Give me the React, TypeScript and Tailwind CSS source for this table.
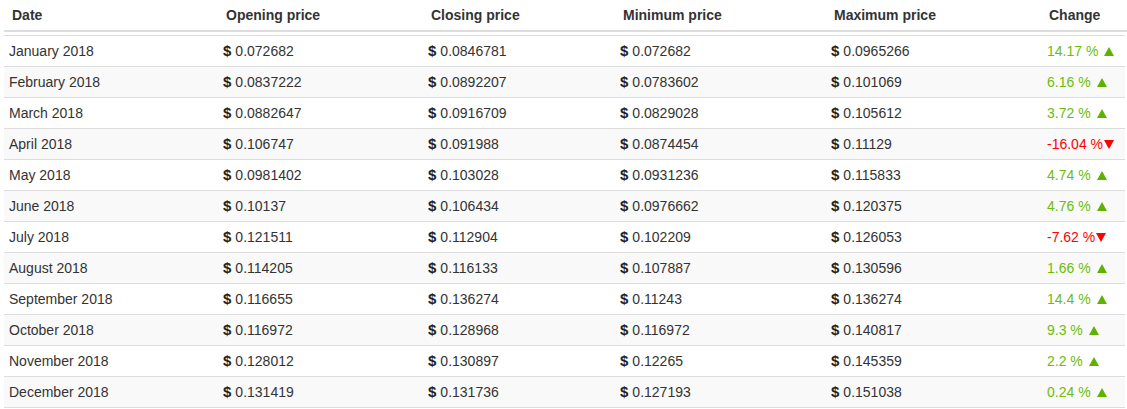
import React from "react";

type Row = { d: string; o: string; c: string; mi: string; ma: string; ch: string; up: boolean };

const rows: Row[] = [
  { d: "January 2018", o: "0.072682", c: "0.0846781", mi: "0.072682", ma: "0.0965266", ch: "14.17 %", up: true },
  { d: "February 2018", o: "0.0837222", c: "0.0892207", mi: "0.0783602", ma: "0.101069", ch: "6.16 %", up: true },
  { d: "March 2018", o: "0.0882647", c: "0.0916709", mi: "0.0829028", ma: "0.105612", ch: "3.72 %", up: true },
  { d: "April 2018", o: "0.106747", c: "0.091988", mi: "0.0874454", ma: "0.11129", ch: "-16.04 %", up: false },
  { d: "May 2018", o: "0.0981402", c: "0.103028", mi: "0.0931236", ma: "0.115833", ch: "4.74 %", up: true },
  { d: "June 2018", o: "0.10137", c: "0.106434", mi: "0.0976662", ma: "0.120375", ch: "4.76 %", up: true },
  { d: "July 2018", o: "0.121511", c: "0.112904", mi: "0.102209", ma: "0.126053", ch: "-7.62 %", up: false },
  { d: "August 2018", o: "0.114205", c: "0.116133", mi: "0.107887", ma: "0.130596", ch: "1.66 %", up: true },
  { d: "September 2018", o: "0.116655", c: "0.136274", mi: "0.11243", ma: "0.136274", ch: "14.4 %", up: true },
  { d: "October 2018", o: "0.116972", c: "0.128968", mi: "0.116972", ma: "0.140817", ch: "9.3 %", up: true },
  { d: "November 2018", o: "0.128012", c: "0.130897", mi: "0.12265", ma: "0.145359", ch: "2.2 %", up: true },
  { d: "December 2018", o: "0.131419", c: "0.131736", mi: "0.127193", ma: "0.151038", ch: "0.24 %", up: true },
];

const Price = ({ v }: { v: string }) => (
  <div className="pl-[5px] flex items-center">
    <span className="font-bold text-[15px] mr-[4px] text-[#222]">$</span>
    <span>{v}</span>
  </div>
);

const Up = () => (
  <svg width="10" height="9" viewBox="0 0 10 9" className="ml-[6px] inline-block">
    <polygon points="5,0 10,9 0,9" fill="#5fb300" />
  </svg>
);

const Down = () => (
  <svg width="10" height="9" viewBox="0 0 10 9" className="ml-[1px] inline-block">
    <polygon points="0,0 10,0 5,9" fill="#ff0000" />
  </svg>
);

export default function App() {
  return (
    <div
      className="w-[1127px] h-[409px] bg-white pl-[4px] text-[14px] text-[#333]"
      style={{ fontFamily: '"Liberation Sans", Arial, sans-serif' }}
    >
      <div className="grid grid-cols-[214px_205px_192px_211px_216px_85px] h-[32px] border-b-2 border-[#dddddd] items-center font-bold">
        <div className="pl-[8px]">Date</div>
        <div className="pl-[8px]">Opening price</div>
        <div className="pl-[8px]">Closing price</div>
        <div className="pl-[8px]">Minimum price</div>
        <div className="pl-[8px]">Maximum price</div>
        <div className="pl-[7px]">Change</div>
      </div>
      <div className="h-[3px]" />
      <div className="w-[1121px] border-b border-[#dddddd]">
        {rows.map((r, i) => (
          <div
            key={r.d}
            className={
              "grid grid-cols-[214px_205px_192px_211px_216px_83px] h-[31px] border-t border-[#dddddd] items-center " +
              (i % 2 === 1 ? "bg-[#f9f9f9]" : "bg-white")
            }
          >
            <div className="pl-[5px]">{r.d}</div>
            <Price v={r.o} />
            <Price v={r.c} />
            <Price v={r.mi} />
            <Price v={r.ma} />
            <div className={"pl-[5px] flex items-center " + (r.up ? "text-[#6cbd0a]" : "text-[#ff0000]")}>
              <span>{r.ch}</span>
              {r.up ? <Up /> : <Down />}
            </div>
          </div>
        ))}
      </div>
    </div>
  );
}
